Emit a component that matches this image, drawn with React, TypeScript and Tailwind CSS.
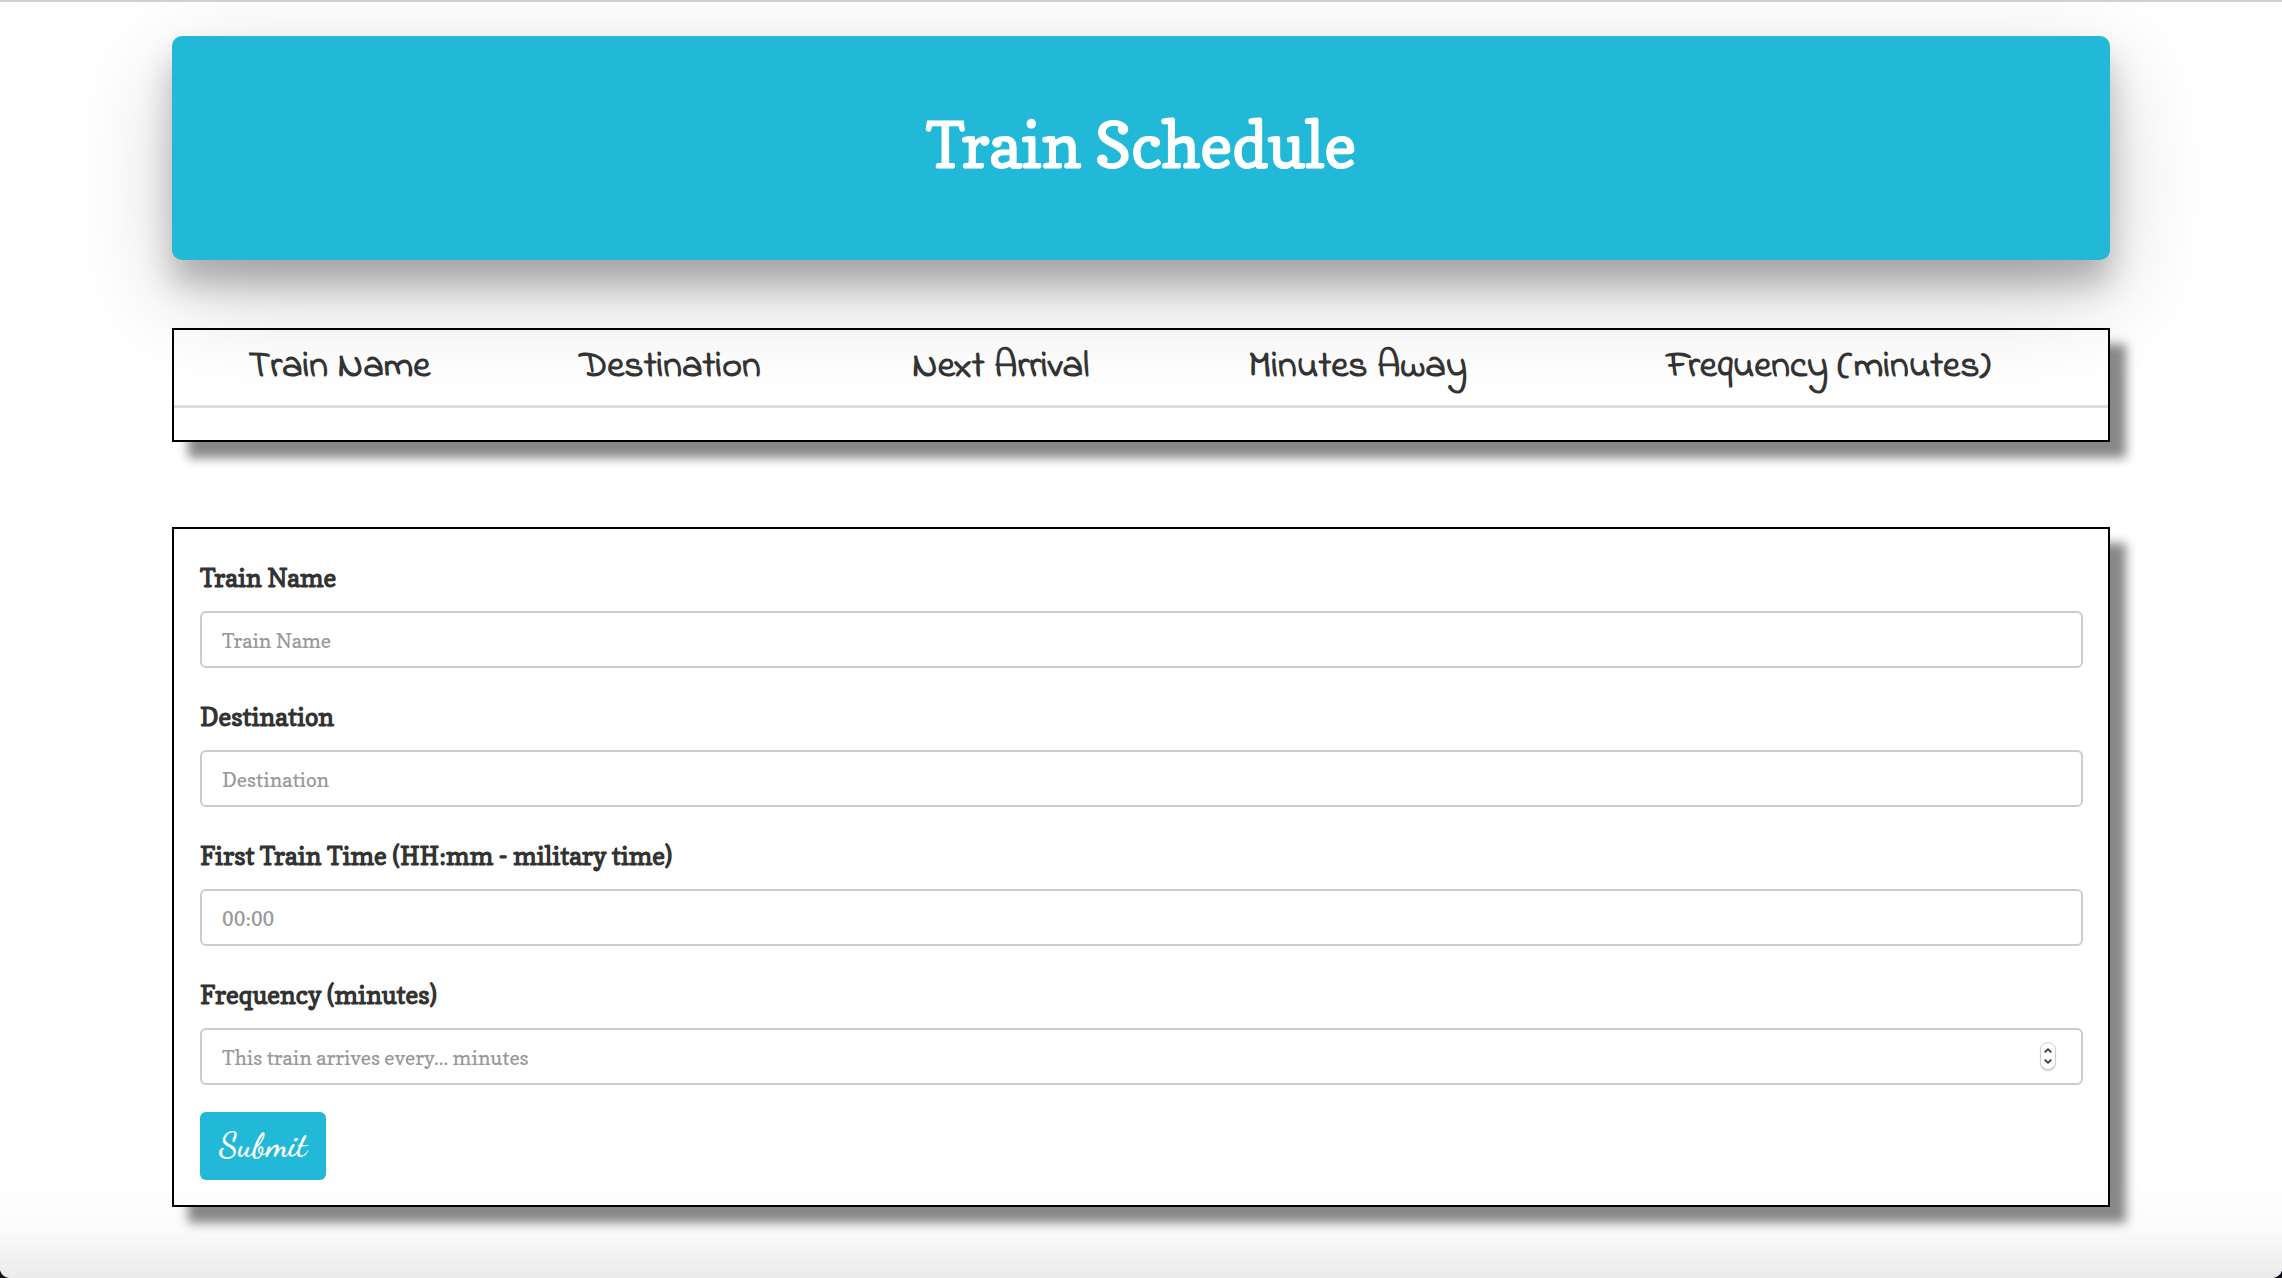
const columns = [
  { title: 'Train Name', width: 'w-[17.1%]' },
  { title: 'Destination', width: 'w-[17.1%]' },
  { title: 'Next Arrival', width: 'w-[17.1%]' },
  { title: 'Minutes Away', width: 'w-[19.8%]' },
  { title: 'Frequency (minutes)', width: 'w-[28.9%]' },
];

const inputClass =
  "h-[57px] w-full appearance-none rounded-md border-2 border-[#ccc] bg-white px-5 pt-1 text-[20px] text-[#555] outline-none [-moz-appearance:textfield] [&::-webkit-inner-spin-button]:appearance-none placeholder:text-[#999] placeholder:opacity-100 focus:border-[#22b8d8]";

function Field({ id, label, placeholder, type = 'text' }: { id: string; label: string; placeholder: string; type?: string }) {
  return (
    <div className="mb-[27px]">
      <label htmlFor={id} className="mb-[11px] block text-[25px] leading-[44px] font-bold text-[#333]">
        {label}
      </label>
      <div className="relative">
        <input id={id} name={id} type={type} placeholder={placeholder} className={inputClass} />
        {type === 'number' && <Stepper />}
      </div>
    </div>
  );
}

function Stepper() {
  return (
    <div className="absolute inset-y-0 right-[27px] flex items-center">
      <div className="flex h-7 w-4 flex-col justify-center rounded-full border border-[#ccc] bg-white shadow-[0_1px_1px_rgba(0,0,0,0.2)]">
        <button type="button" aria-label="Increase" className="flex h-[11px] items-center justify-center">
          <svg viewBox="0 0 8 5" className="h-[5px] w-2" fill="none" stroke="#333" strokeWidth="1.7">
            <path d="M.7 4.3 4 1.2l3.300 3.100" />
          </svg>
        </button>
        <button type="button" aria-label="Decrease" className="flex h-[11px] items-center justify-center">
          <svg viewBox="0 0 8 5" className="h-[5px] w-2" fill="none" stroke="#333" strokeWidth="1.7">
            <path d="M.7.7 4 3.800 7.300.7" />
          </svg>
        </button>
      </div>
    </div>
  );
}

export default function App() {
  return (
    <div className="bg-[#10101c] font-['Copse','DejaVu_Serif_Condensed',serif]">
      <div className="min-h-screen overflow-hidden rounded-b-[10px] border-t-2 border-[#d0d0d0] bg-white bg-linear-to-t from-[#ebebeb] via-[#fbfbfb] via-[50px] to-white to-[96px] px-[172px] pt-[34px] pb-[71px]">
        <header className="rounded-[10px] bg-[#22b8d8] px-8 pt-[69px] pb-[75px] text-center shadow-[0_24px_32px_rgba(0,0,0,0.24),0_34px_100px_rgba(0,0,0,0.19)]">
          <h1 className="text-[63px] leading-[80px] text-white [-webkit-text-stroke:1px_white]">Train Schedule</h1>
        </header>

        <main>
          <section className="mt-[68px] border-2 border-black pb-8 shadow-[16px_16px_10px_#888]">
            <table className="w-full table-fixed border-collapse font-['Indie_Flower','Lato',sans-serif] text-[#333]">
              <thead>
                <tr className="border-b-[3px] border-[#ddd]">
                  {columns.map((c) => (
                    <th key={c.title} scope="col" className={`${c.width} h-[76px] p-0 text-[38px] leading-[40px] font-bold`}>
                      {c.title}
                    </th>
                  ))}
                </tr>
              </thead>
              <tbody />
            </table>
          </section>

          <form className="mt-[85px] border-2 border-black pt-[27px] pr-[25px] pb-[25px] pl-[26px] shadow-[16px_16px_10px_#888]" onSubmit={(e) => e.preventDefault()}>
            <Field id="train-name" label="Train Name" placeholder="Train Name" />
            <Field id="destination" label="Destination" placeholder="Destination" />
            <Field id="first-train" label="First Train Time (HH:mm - military time)" placeholder="00:00" />
            <Field id="frequency" label="Frequency (minutes)" placeholder="This train arrives every... minutes" type="number" />
            <button type="submit" className="block rounded-md bg-[#22b8d8] px-[19px] py-3 font-['Dancing_Script','Liberation_Serif',serif] text-[34px] leading-[44px] font-semibold text-white">
              Submit
            </button>
          </form>
        </main>
      </div>
    </div>
  );
}
